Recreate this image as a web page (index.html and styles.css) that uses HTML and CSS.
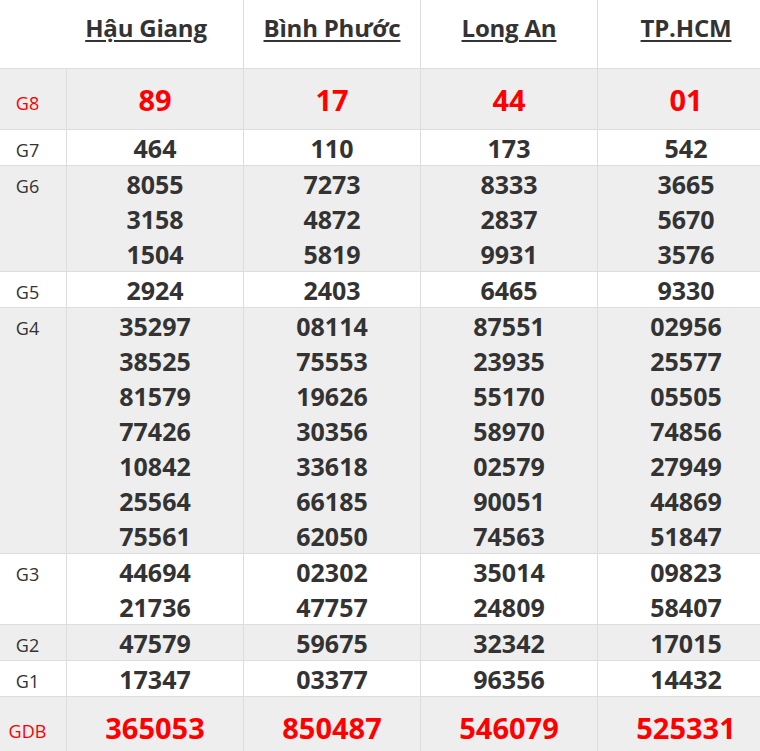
FILE: index.html
```html
<!DOCTYPE html>
<html lang="vi">
<head>
<meta charset="utf-8">
<title>Kết quả xổ số</title>
<link rel="stylesheet" href="styles.css">
</head>
<body>
<table class="kq">
  <thead>
    <tr>
      <th class="lbl-h"></th>
      <th class="prov prov-first"><a>Hậu Giang</a></th>
      <th class="prov"><a>Bình Phước</a></th>
      <th class="prov"><a>Long An</a></th>
      <th class="prov"><a>TP.HCM</a></th>
    </tr>
  </thead>
  <tbody>
    <tr class="alt big">
      <td class="lbl red">G8</td>
      <td class="num red"><div>89</div></td>
      <td class="num red"><div>17</div></td>
      <td class="num red"><div>44</div></td>
      <td class="num red"><div>01</div></td>
    </tr>
    <tr>
      <td class="lbl">G7</td>
      <td class="num"><div>464</div></td>
      <td class="num"><div>110</div></td>
      <td class="num"><div>173</div></td>
      <td class="num"><div>542</div></td>
    </tr>
    <tr class="alt">
      <td class="lbl">G6</td>
      <td class="num"><div>8055</div><div>3158</div><div>1504</div></td>
      <td class="num"><div>7273</div><div>4872</div><div>5819</div></td>
      <td class="num"><div>8333</div><div>2837</div><div>9931</div></td>
      <td class="num"><div>3665</div><div>5670</div><div>3576</div></td>
    </tr>
    <tr>
      <td class="lbl">G5</td>
      <td class="num"><div>2924</div></td>
      <td class="num"><div>2403</div></td>
      <td class="num"><div>6465</div></td>
      <td class="num"><div>9330</div></td>
    </tr>
    <tr class="alt">
      <td class="lbl">G4</td>
      <td class="num"><div>35297</div><div>38525</div><div>81579</div><div>77426</div><div>10842</div><div>25564</div><div>75561</div></td>
      <td class="num"><div>08114</div><div>75553</div><div>19626</div><div>30356</div><div>33618</div><div>66185</div><div>62050</div></td>
      <td class="num"><div>87551</div><div>23935</div><div>55170</div><div>58970</div><div>02579</div><div>90051</div><div>74563</div></td>
      <td class="num"><div>02956</div><div>25577</div><div>05505</div><div>74856</div><div>27949</div><div>44869</div><div>51847</div></td>
    </tr>
    <tr>
      <td class="lbl">G3</td>
      <td class="num"><div>44694</div><div>21736</div></td>
      <td class="num"><div>02302</div><div>47757</div></td>
      <td class="num"><div>35014</div><div>24809</div></td>
      <td class="num"><div>09823</div><div>58407</div></td>
    </tr>
    <tr class="alt">
      <td class="lbl">G2</td>
      <td class="num"><div>47579</div></td>
      <td class="num"><div>59675</div></td>
      <td class="num"><div>32342</div></td>
      <td class="num"><div>17015</div></td>
    </tr>
    <tr>
      <td class="lbl">G1</td>
      <td class="num"><div>17347</div></td>
      <td class="num"><div>03377</div></td>
      <td class="num"><div>96356</div></td>
      <td class="num"><div>14432</div></td>
    </tr>
    <tr class="alt big">
      <td class="lbl red">GDB</td>
      <td class="num red"><div>365053</div></td>
      <td class="num red"><div>850487</div></td>
      <td class="num red"><div>546079</div></td>
      <td class="num red"><div>525331</div></td>
    </tr>
  </tbody>
</table>
</body>
</html>
```

FILE: styles.css
```css
html, body {
  margin: 0;
  padding: 0;
  overflow: hidden;
  background: #fff;
}

body {
  font-family: "Open Sans", "Noto Sans", "Liberation Sans", sans-serif;
  color: #333;
}

.kq {
  border-collapse: separate;
  border-spacing: 0;
  table-layout: fixed;
  width: 775px;
}

.kq th,
.kq td {
  box-sizing: border-box;
  padding: 0;
  border-right: 1px solid #ddd;
  border-bottom: 1px solid #ddd;
}

.kq th {
  height: 69px;
  vertical-align: top;
  padding-top: 11px;
  width: 177px;
}

.kq th.lbl-h {
  width: 67px;
  border-right: none;
}

.prov {
  font-size: 24px;
  font-weight: 700;
  text-align: center;
  letter-spacing: -0.2px;
}

.prov a {
  color: #333;
  text-decoration: underline;
  text-decoration-thickness: 2px;
  text-underline-offset: 3px;
}

.kq th.prov-first {
  padding-right: 18px;
}

.kq tr.alt td {
  background: #eeeeee;
}

.kq td {
  vertical-align: baseline;
}

.kq td.lbl {
  font-size: 18px;
  text-align: center;
  padding-right: 11px;
  color: #333;
}

.num {
  font-size: 25px;
  font-weight: 700;
  line-height: 35px;
  text-align: center;
  color: #333;
}

.num div {
  position: relative;
  top: 1px;
}

.big .num {
  font-size: 29px;
  line-height: 60px;
}

.kq td.red {
  color: #f00;
}
```
